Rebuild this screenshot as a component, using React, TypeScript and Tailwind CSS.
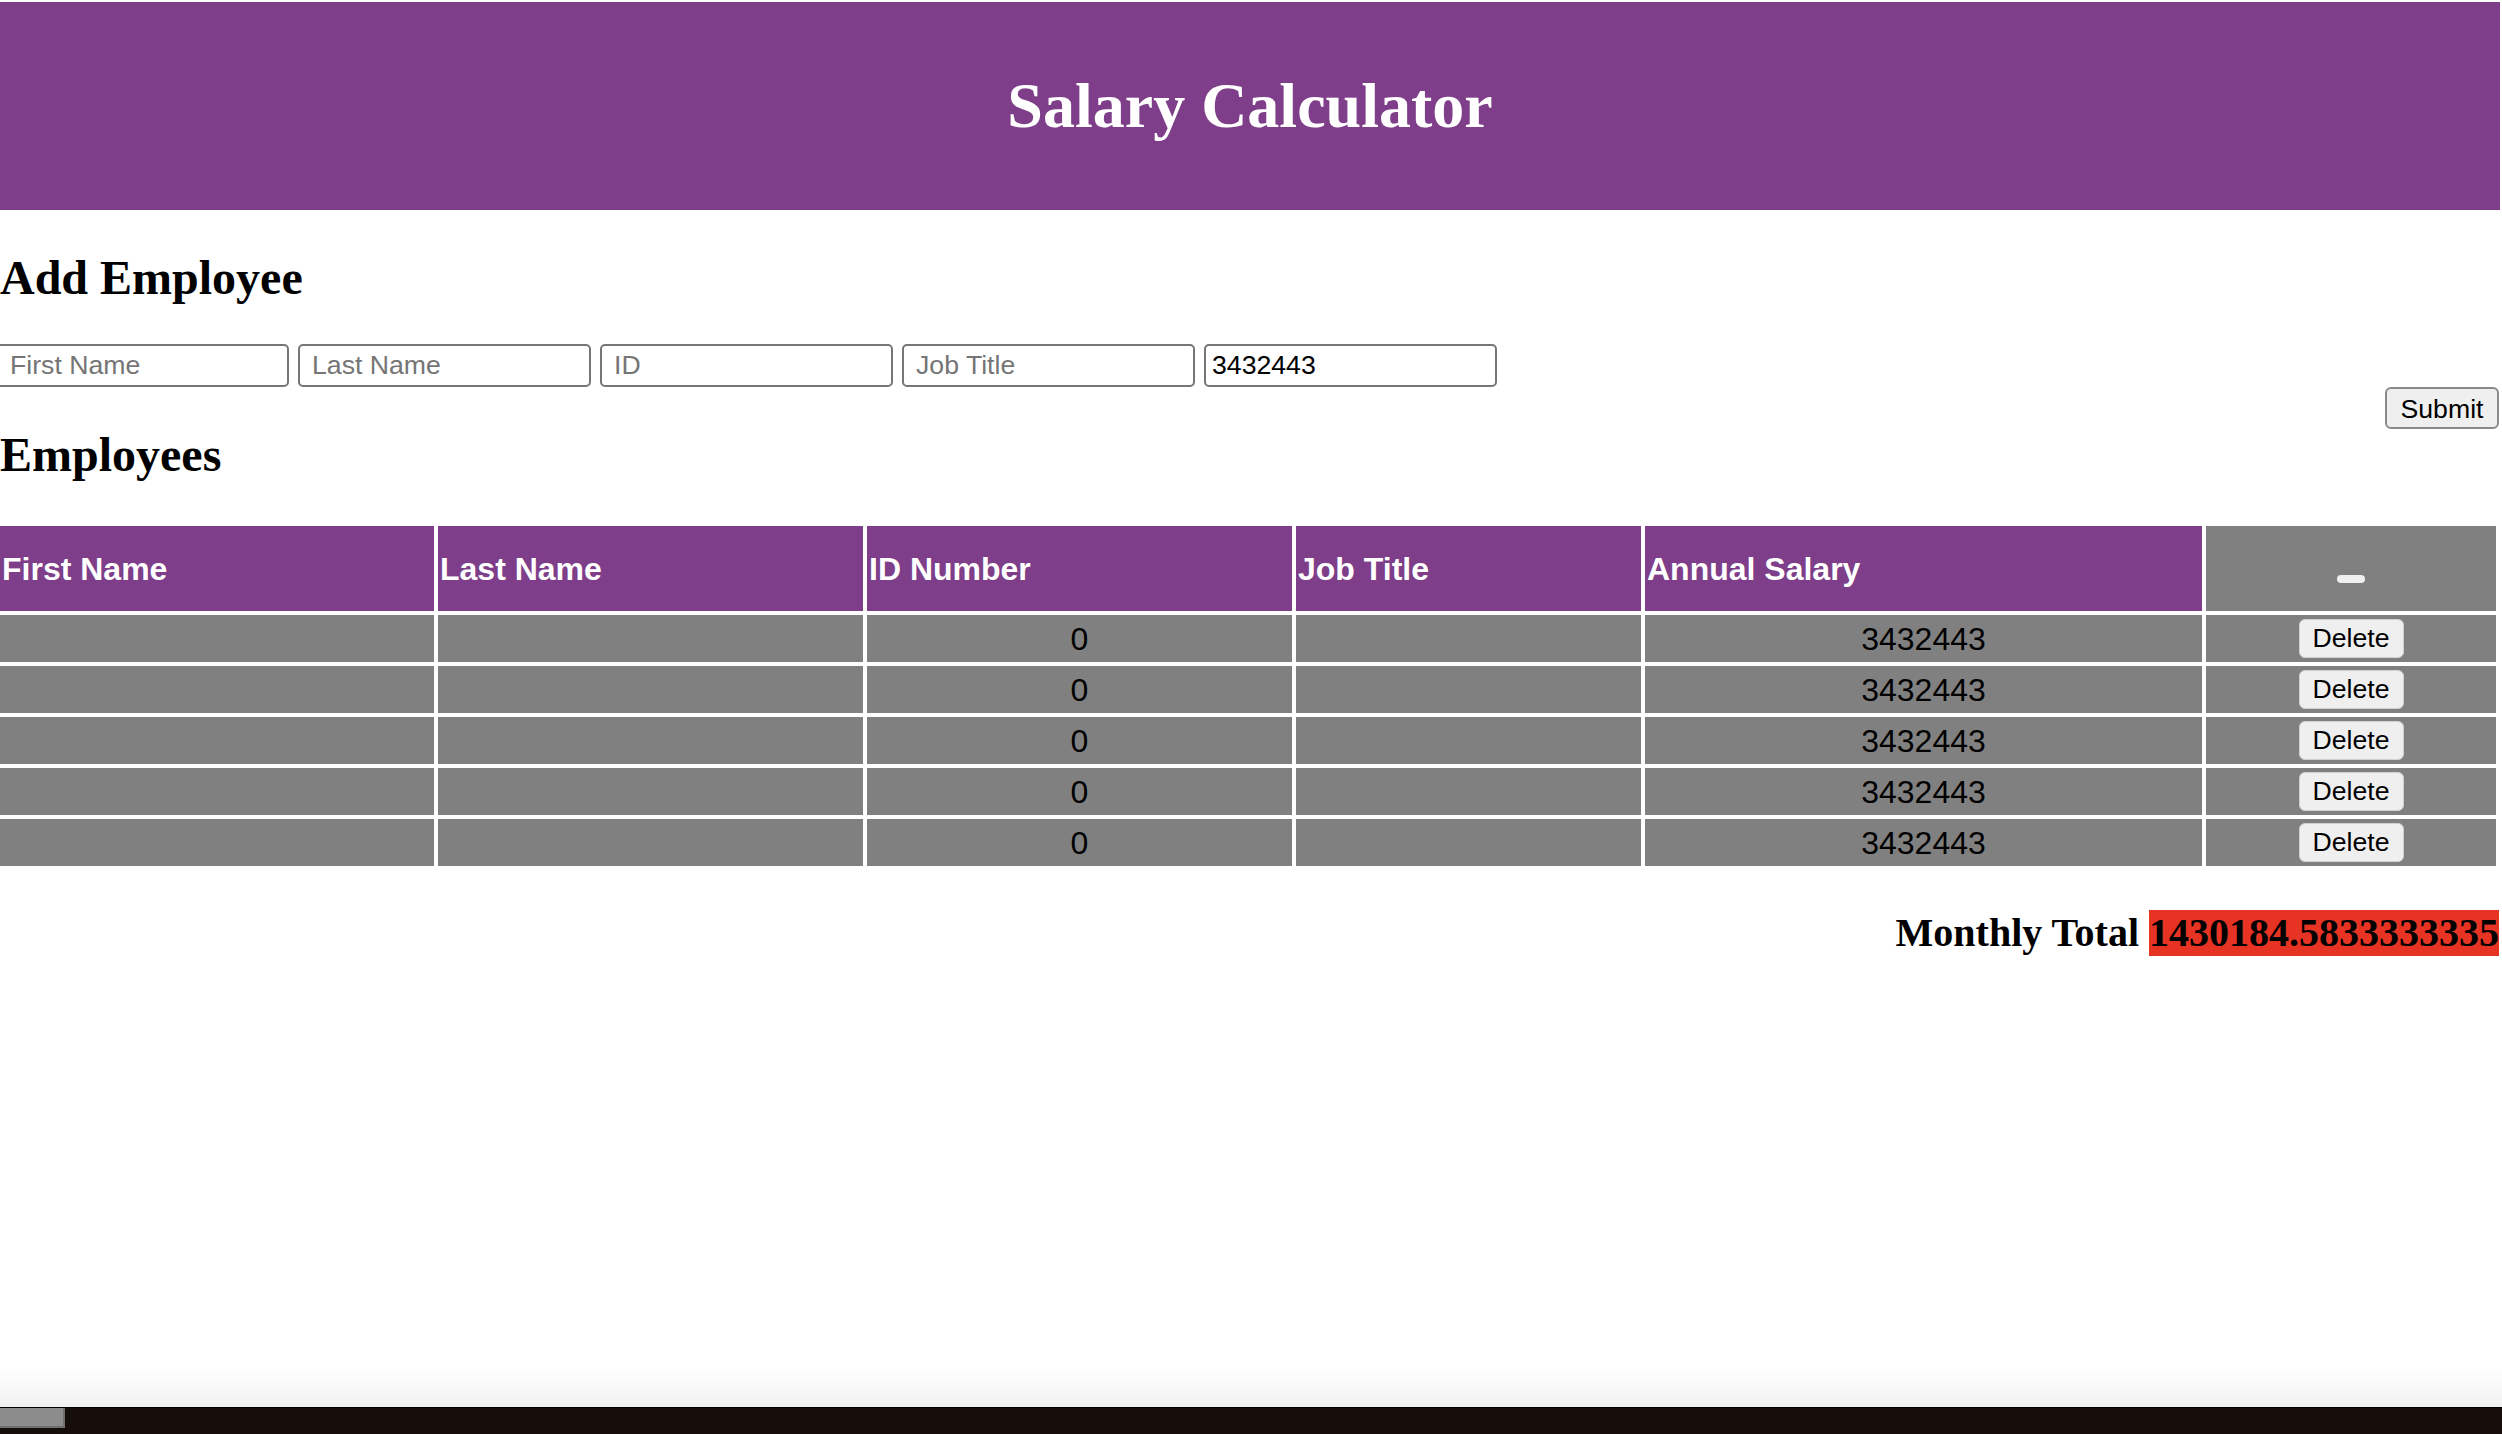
const rows = [0, 1, 2, 3, 4].map(() => ({ first: "", last: "", id: 0, title: "", salary: 3432443 }));

const serif = { fontFamily: '"Liberation Serif", "Times New Roman", serif' };

export default function App() {
  return (
    <div className="w-[2502px] h-[1434px] flex flex-col bg-white overflow-hidden font-['Liberation_Sans',Arial,sans-serif]">
      <div className="flex-1 pt-[2px] pr-[2px] bg-white">
        <header className="h-[208px] bg-[#7e3e89] flex items-center justify-center">
          <h1 style={serif} className="text-[64px] font-bold text-white leading-none">Salary Calculator</h1>
        </header>

        <h2 style={serif} className="mt-[40px] mb-[39px] text-[48px] font-bold leading-[55px] text-black">Add Employee</h2>

        <form onSubmit={(e) => e.preventDefault()}>
          <div className="flex gap-[9px] -ml-[4px]">
            {["First Name", "Last Name", "ID", "Job Title"].map((p) => (
              <input
                key={p}
                type="text"
                placeholder={p}
                className="w-[293px] h-[43px] border-2 border-[#767676] rounded-[5px] pl-[12px] text-[26.67px] text-black placeholder:text-[#757575] bg-white"
              />
            ))}
            <input
              type="text"
              defaultValue="3432443"
              className="w-[293px] h-[43px] border-2 border-[#767676] rounded-[5px] pl-[6px] text-[26.67px] text-black bg-white"
            />
          </div>
          <button className="float-right mr-[1px] w-[114px] h-[42px] border-2 border-[#8a8a8a] rounded-[6px] bg-[#efefef] text-[26.67px] text-black">
            Submit
          </button>
        </form>

        <h2 style={serif} className="mt-[40px] mb-[40px] text-[48px] font-bold leading-[55px] text-black">Employees</h2>

        <table className="-ml-[4px] w-[2504px] border-separate border-spacing-[4px] table-fixed">
          <colgroup>
            <col className="w-[434px]" />
            <col className="w-[425px]" />
            <col className="w-[425px]" />
            <col className="w-[345px]" />
            <col className="w-[557px]" />
            <col className="w-[290px]" />
          </colgroup>
          <thead>
            <tr className="h-[85px]">
              {["First Name", "Last Name", "ID Number", "Job Title", "Annual Salary"].map((h) => (
                <th key={h} className="bg-[#7e3e89] text-white text-left font-bold text-[32px] leading-none px-[2px] py-0 align-middle">
                  {h}
                </th>
              ))}
              <th className="bg-[#808080] p-0 align-middle">
                <div className="flex justify-center">
                  <button className="mt-[21px] w-[28px] h-[8px] rounded-[4px] bg-[#efefef]" />
                </div>
              </th>
            </tr>
          </thead>
          <tbody>
            {rows.map((r, i) => (
              <tr key={i} className="h-[47px]">
                <td className="bg-[#808080] p-0 text-center text-[32px] leading-none text-black align-middle">{r.first}</td>
                <td className="bg-[#808080] p-0 text-center text-[32px] leading-none text-black align-middle">{r.last}</td>
                <td className="bg-[#808080] p-0 text-center text-[32px] leading-none text-black align-middle">{r.id}</td>
                <td className="bg-[#808080] p-0 text-center text-[32px] leading-none text-black align-middle">{r.title}</td>
                <td className="bg-[#808080] p-0 text-center text-[32px] leading-none text-black align-middle">{r.salary}</td>
                <td className="bg-[#808080] p-0 align-middle">
                  <button className="block mx-auto w-[105px] h-[39px] rounded-[6px] border border-[#d0d0d0] bg-[#efefef] text-[26.67px] text-black leading-none">
                    Delete
                  </button>
                </td>
              </tr>
            ))}
          </tbody>
        </table>

        <div style={serif} className="mt-[40px] text-right text-[40px] font-bold leading-[46px] text-black pr-[1px]">
          Monthly Total <span className="inline-block bg-[#e73323]">1430184.5833333335</span>
        </div>
      </div>

      <div className="h-[40px] bg-gradient-to-b from-white to-[#f1f1f1]" />
      <div className="h-[1px] bg-black" />
      <div className="h-[26px] bg-[#150e0b] flex items-start">
        <div className="w-[65px] h-[20px] bg-[#8c8c8c] border-r-2 border-b-2 border-[#6f6f6f]" />
      </div>
    </div>
  );
}
